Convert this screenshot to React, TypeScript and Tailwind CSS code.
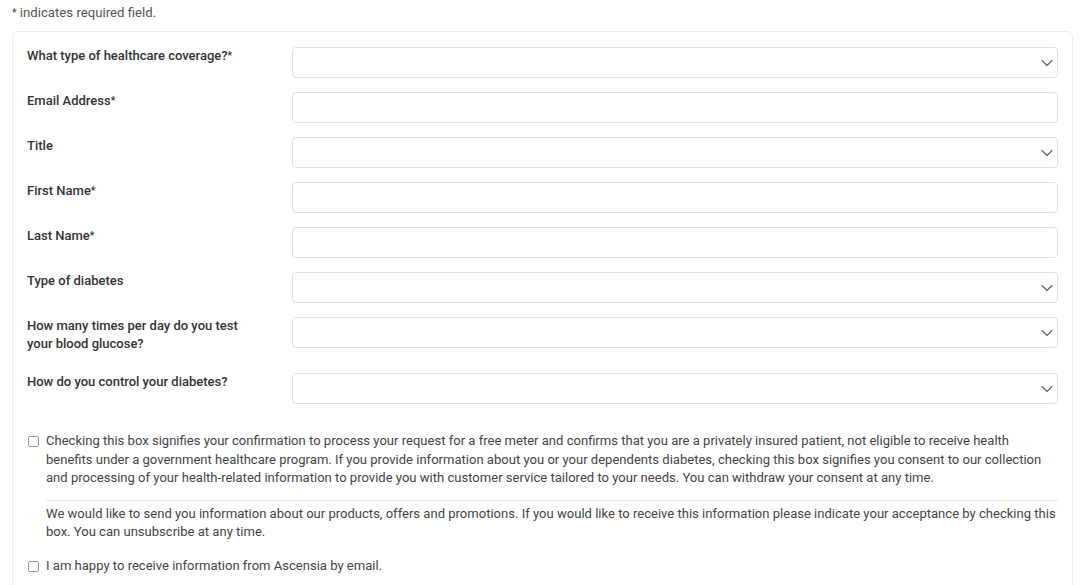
import React from "react";

const Chevron = () => (
  <svg width="12" height="7" viewBox="0 0 12 7" className="absolute right-[4px] top-1/2 -translate-y-1/2" fill="none">
    <path d="M1 1l5 5 5-5" stroke="#666" strokeWidth="1.2" strokeLinecap="round" strokeLinejoin="round" />
  </svg>
);

type Field = { label: string; req?: boolean; select?: boolean };

const fields: Field[] = [
  { label: "What type of healthcare coverage?", req: true, select: true },
  { label: "Email Address", req: true },
  { label: "Title", select: true },
  { label: "First Name", req: true },
  { label: "Last Name", req: true },
  { label: "Type of diabetes", select: true },
  { label: "How many times per day do you test your blood glucose?", select: true },
  { label: "How do you control your diabetes?", select: true },
];

const Box = () => (
  <span className="mt-[4px] block w-[11px] h-[11px] shrink-0 rounded-[2px] border border-[#9a9a9a] bg-white" />
);

const Star = () => <span className="text-[10px] font-bold align-[1px]">*</span>;

export default function App() {
  return (
    <div className="w-[1080px] h-[585px] overflow-hidden bg-white font-['Roboto',_'Liberation_Sans',_sans-serif] text-[#333]">
      <p className="pl-[12px] pt-[4px] text-[13.2px] leading-[18px] text-[#555]">
        <Star /> indicates required field.
      </p>
      <div className="ml-[12px] mr-[7px] mt-[9px] rounded-[6px] border border-[#ececec] px-[14px] pt-[15px] pb-[20px] h-[600px]">
        <div className="flex flex-col gap-[14px]">
          {fields.map((f) => (
            <div key={f.label} className="grid grid-cols-[265px_1fr]">
              <div className="pr-[20px] pb-[6px] text-[13px] leading-[18px] font-medium text-[#333]">
                <span className={f.label.startsWith("How many") ? "block w-[225px]" : ""}>{f.label}</span>
                {f.req && <Star />}
              </div>
              <div className="relative h-[31px] rounded-[4px] border border-[#e0e0e0] bg-white">
                {f.select && <Chevron />}
              </div>
            </div>
          ))}
        </div>

        <div className="mt-[28px] flex gap-[7px] pl-[1px] text-[13.05px] leading-[18.5px] text-[#444]">
          <Box />
          <div className="flex-1">
            <p>
              Checking this box signifies your confirmation to process your request for a free meter and confirms that you are a privately insured patient, not eligible to receive health benefits under a government healthcare program. If you provide information about you or your dependents diabetes, checking this box signifies you consent to our collection and processing of your health-related information to provide you with customer service tailored to your needs. You can withdraw your consent at any time.
            </p>
            <div className="mt-[12px] border-t border-[#e4e4e4] pt-[4px]">
              <p>
                We would like to send you information about our products, offers and promotions. If you would like to receive this information please indicate your acceptance by checking this box. You can unsubscribe at any time.
              </p>
            </div>
          </div>
        </div>

        <div className="mt-[15px] flex gap-[7px] pl-[1px] text-[13.05px] leading-[18.5px] text-[#444]">
          <Box />
          <p>I am happy to receive information from Ascensia by email.</p>
        </div>
      </div>
    </div>
  );
}
